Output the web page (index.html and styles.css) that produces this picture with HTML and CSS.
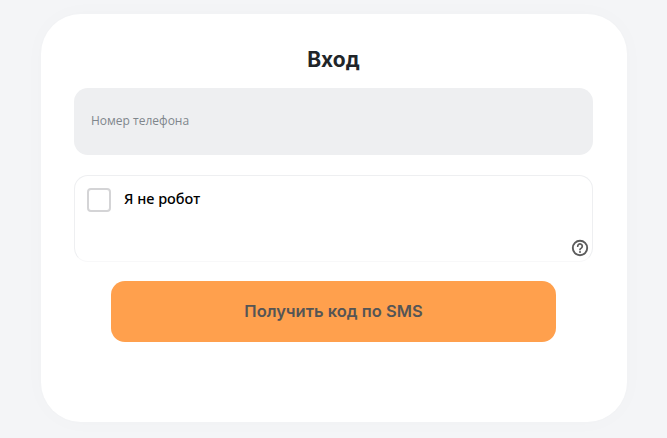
FILE: index.html
```html
<!DOCTYPE html>
<html lang="ru">

<head>
    <meta charset="UTF-8">
    <title>Вход</title>
    <link rel="stylesheet" href="styles.css">
</head>

<body>
    <div class="card">
        <div class="title">Вход</div>
        <div class="phone">Номер телефона</div>
        <div class="captcha">
            <div class="captcha-row">
                <div class="check"></div>
                <span class="captcha-label">Я не робот</span>
            </div>
            <svg class="help" width="18" height="18" viewBox="0 0 18 18" fill="none">
                <circle cx="9" cy="9" r="7.2" stroke="#5c5c5c" stroke-width="1.9" />
                <path d="M6.7 7.2a2.3 2.3 0 1 1 3.6 1.9c-.8.5-1.3.9-1.3 1.5" stroke="#5c5c5c" stroke-width="1.7" stroke-linecap="round" />
                <circle cx="9" cy="13" r="1" fill="#5c5c5c" />
            </svg>
        </div>
        <div class="submit">Получить код по SMS</div>
    </div>
</body>

</html>
```

FILE: styles.css
```css
body {
    margin: 0;
    height: 438px;
    overflow: hidden;
    background-color: #f4f5f7;
    font-family: "Inter", "Noto Sans", sans-serif;
}

.card {
    box-sizing: border-box;
    width: 586px;
    height: 408px;
    margin: 14px 0 0 41px;
    padding: 32px 34px 0 33px;
    display: flex;
    flex-direction: column;
    align-items: center;
    background-color: white;
    border-radius: 40px;
    box-shadow: 0 0 24px rgba(0, 0, 0, 0.02);
}

.title {
    height: 28px;
    line-height: 28px;
    font-size: 21px;
    font-weight: 700;
    color: #212529;
}

.phone {
    box-sizing: border-box;
    width: 519px;
    height: 67px;
    margin-top: 14px;
    padding: 0 0 2px 17px;
    display: flex;
    align-items: center;
    background-color: #eeeff1;
    border-radius: 14px;
    font-family: "Open Sans", sans-serif;
    font-size: 12px;
    color: #7f868c;
}

.captcha {
    position: relative;
    box-sizing: border-box;
    width: 519px;
    height: 87px;
    margin-top: 20px;
    padding: 12px 12px 0;
    border: 1px solid #eeeff1;
    border-bottom-color: #f8f8f9;
    border-radius: 14px;
}

.captcha-row {
    display: flex;
    align-items: flex-start;
    gap: 13px;
}

.check {
    box-sizing: border-box;
    width: 24px;
    height: 24px;
    background-color: white;
    border: 2px solid #d4d4d6;
    border-radius: 4px;
}

.captcha-label {
    line-height: 21px;
    font-family: "Noto Sans", sans-serif;
    font-size: 14.5px;
    font-weight: 500;
    color: black;
}

.help {
    position: absolute;
    right: 3px;
    bottom: 4px;
}

.submit {
    width: 445px;
    height: 61px;
    margin-top: 19px;
    padding-bottom: 2px;
    box-sizing: border-box;
    display: flex;
    justify-content: center;
    align-items: center;
    background-color: #ffa04d;
    border-radius: 14px;
    font-size: 16.5px;
    font-weight: 600;
    color: #555555;
}
```
